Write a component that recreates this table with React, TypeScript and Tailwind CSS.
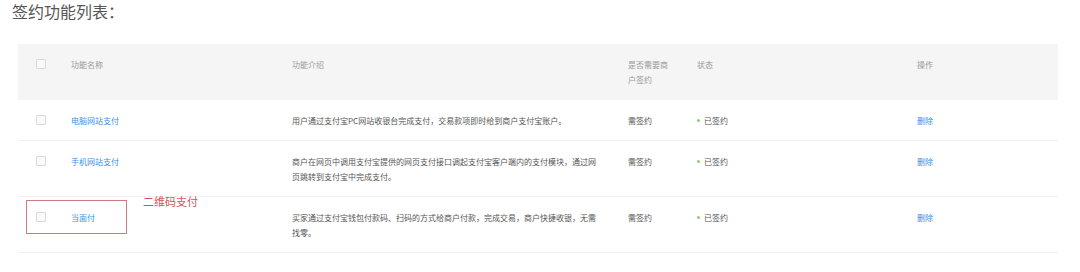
import React from 'react';

interface FeatureRow {
  name: string;
  intro: string;
  sign: string;
  status: string;
}

const rows: FeatureRow[] = [
  {
    name: '电脑网站支付',
    intro: '用户通过支付宝PC网站收银台完成支付，交易款项即时给到商户支付宝账户。',
    sign: '需签约',
    status: '已签约',
  },
  {
    name: '手机网站支付',
    intro: '商户在网页中调用支付宝提供的网页支付接口调起支付宝客户端内的支付模块，通过网页跳转到支付宝中完成支付。',
    sign: '需签约',
    status: '已签约',
  },
  {
    name: '当面付',
    intro: '买家通过支付宝钱包付款码、扫码的方式给商户付款，完成交易，商户快捷收银，无需找零。',
    sign: '需签约',
    status: '已签约',
  },
];

const gridCols = 'grid grid-cols-[37px_221px_336px_69px_220px_1fr]';

const Checkbox = () => (
  <span className="block w-[10px] h-[10px] mt-[2px] border border-[#d9d9d9] rounded-[1px] bg-[#fafafa]" />
);

export default function App() {
  return (
    <div
      className="relative w-[1080px] h-[272px] bg-white overflow-hidden"
      style={{ fontFamily: '"Noto Sans CJK SC", "Noto Sans", sans-serif' }}
    >
      <div className="pl-[12px] pt-[1px] text-[16px] leading-[20px] text-[#555]">签约功能列表：</div>

      <div className="mt-[23px] ml-[18px] w-[1040px] text-[8px] leading-[15px]">
        {/* header */}
        <div className={`${gridCols} bg-[#f5f5f5] text-[#999] h-[56px]`}>
          <div className="pl-[18px] pt-[13px]">
            <Checkbox />
          </div>
          <div className="pl-[16px] pt-[13px]">功能名称</div>
          <div className="pl-[16px] pt-[13px]">功能介绍</div>
          <div className="pl-[16px] pr-[9px] pt-[13px]">是否需要商户签约</div>
          <div className="pl-[16px] pt-[13px]">状态</div>
          <div className="pl-[16px] pt-[13px]">操作</div>
        </div>

        {rows.map((r) => (
          <div key={r.name} className={`${gridCols} border-b border-[#efefef] pt-[13px] pb-[12px] text-[#666]`}>
            <div className="pl-[18px]">
              <Checkbox />
            </div>
            <div className="pl-[16px] text-[#3a8ee6]">{r.name}</div>
            <div className="pl-[16px] pr-[13px] text-[#555]">{r.intro}</div>
            <div className="pl-[16px] text-[#555]">{r.sign}</div>
            <div className="pl-[16px] flex items-center h-[15px] text-[#555]">
              <span className="mr-[4px] w-[3px] h-[3px] rounded-full bg-[#87d068]" />
              <span>{r.status}</span>
            </div>
            <div className="pl-[16px] text-[#3a8ee6]">删除</div>
          </div>
        ))}
      </div>

      {/* annotation */}
      <div className="absolute left-[26px] top-[200px] w-[101px] h-[34px] border border-[#d4787c]" />
      <div className="absolute left-[143px] top-[193px] text-[11px] leading-[16px] text-[#d0575b]">二维码支付</div>
    </div>
  );
}
